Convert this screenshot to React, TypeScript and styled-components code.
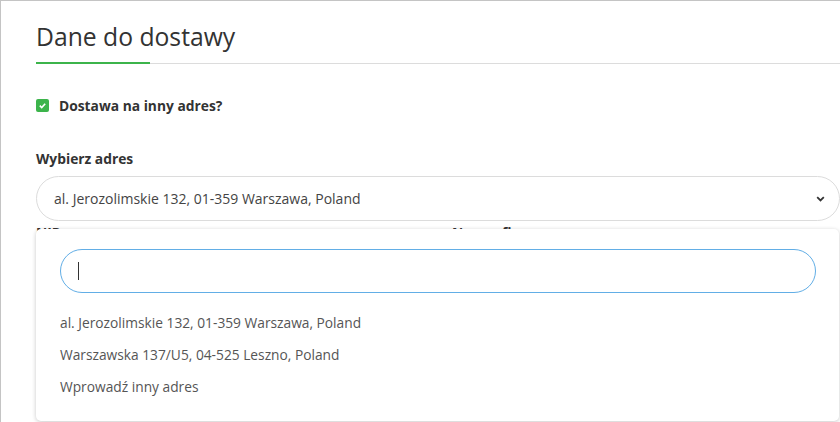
import React from "react";
import styled, { createGlobalStyle } from "styled-components";

const Global = createGlobalStyle`
  html, body { margin: 0; padding: 0; background: #fff; }
  body { font-family: "Open Sans", "Liberation Sans", sans-serif; color: #333; }
  * { box-sizing: border-box; }
`;

const Page = styled.div`
  width: 840px;
  height: 422px;
  overflow: hidden;
  border-top: 1px solid #c4c4c4;
  border-left: 1px solid #c4c4c4;
  padding: 0 0 0 35px;
  position: relative;
`;

const Header = styled.div`
  position: relative;
  border-bottom: 1px solid #dcdcdc;
  height: 63px;
  padding-top: 18px;
`;

const Title = styled.h2`
  margin: 0;
  font-size: 24.7px;
  font-weight: 400;
  color: #333;
  line-height: 36px;
`;

const Accent = styled.div`
  position: absolute;
  left: 0;
  bottom: -1px;
  width: 114px;
  height: 2px;
  background: #3cb44b;
`;

const CheckRow = styled.label`
  display: flex;
  align-items: center;
  gap: 10px;
  margin-top: 34px;
  font-size: 13.8px;
  font-weight: 700;
  color: #333;
  height: 14px;
`;

const Box = styled.span`
  width: 13px;
  height: 13px;
  border-radius: 2px;
  background: #3cb44b;
  display: flex;
  align-items: center;
  justify-content: center;
`;

const Field = styled.div`
  margin-top: 37px;
  position: relative;
`;

const Label = styled.div`
  font-size: 13.8px;
  font-weight: 700;
  color: #333;
  line-height: 20px;
`;

const Select = styled.div`
  margin-top: 7px;
  height: 45px;
  border: 1px solid #dcdcdc;
  border-radius: 23px;
  display: flex;
  align-items: center;
  justify-content: space-between;
  padding: 0 14px 0 17px;
  font-size: 14px;
  color: #444;
`;

const Row = styled.div`
  display: grid;
  grid-template-columns: 1fr 1fr;
  column-gap: 30px;
  margin-top: 2px;
  padding-right: 2px;
`;

const Dropdown = styled.div`
  position: absolute;
  top: 80px;
  left: 0;
  right: 1px;
  height: 192px;
  background: #fff;
  border-radius: 5px;
  box-shadow: 0 1px 4px rgba(0, 0, 0, 0.22);
  padding: 20px 23px 0 24px;
`;

const Search = styled.div`
  height: 44px;
  border: 1px solid #62aee6;
  border-radius: 22px;
  display: flex;
  align-items: center;
  padding-left: 17px;
`;

const Caret = styled.span`
  width: 1px;
  height: 18px;
  background: #333;
`;

const Options = styled.ul`
  list-style: none;
  margin: 14px 0 0;
  padding: 0;
`;

const Option = styled.li`
  font-size: 13.75px;
  color: #555;
  line-height: 32px;
`;

export default function App() {
  return (
    <>
      <Global />
      <Page>
        <Header>
          <Title>Dane do dostawy</Title>
          <Accent />
        </Header>
        <CheckRow>
          <Box>
            <svg width="9" height="9" viewBox="0 0 10 10">
              <path d="M2 5.2 L4.1 7.2 L8 3" fill="none" stroke="#fff" strokeWidth="1.8" />
            </svg>
          </Box>
          Dostawa na inny adres?
        </CheckRow>
        <Field>
          <Label>Wybierz adres</Label>
          <Select>
            <span>al. Jerozolimskie 132, 01-359 Warszawa, Poland</span>
            <svg width="9" height="6" viewBox="0 0 9 6">
              <path d="M1.2 1.2 L4.5 4.4 L7.8 1.2" fill="none" stroke="#333" strokeWidth="1.8" />
            </svg>
          </Select>
          <Row>
            <Label>NIP</Label>
            <Label>Nazwa firmy</Label>
          </Row>
          <Dropdown>
            <Search>
              <Caret />
            </Search>
            <Options>
              <Option>al. Jerozolimskie 132, 01-359 Warszawa, Poland</Option>
              <Option>Warszawska 137/U5, 04-525 Leszno, Poland</Option>
              <Option>Wprowadź inny adres</Option>
            </Options>
          </Dropdown>
        </Field>
      </Page>
    </>
  );
}
